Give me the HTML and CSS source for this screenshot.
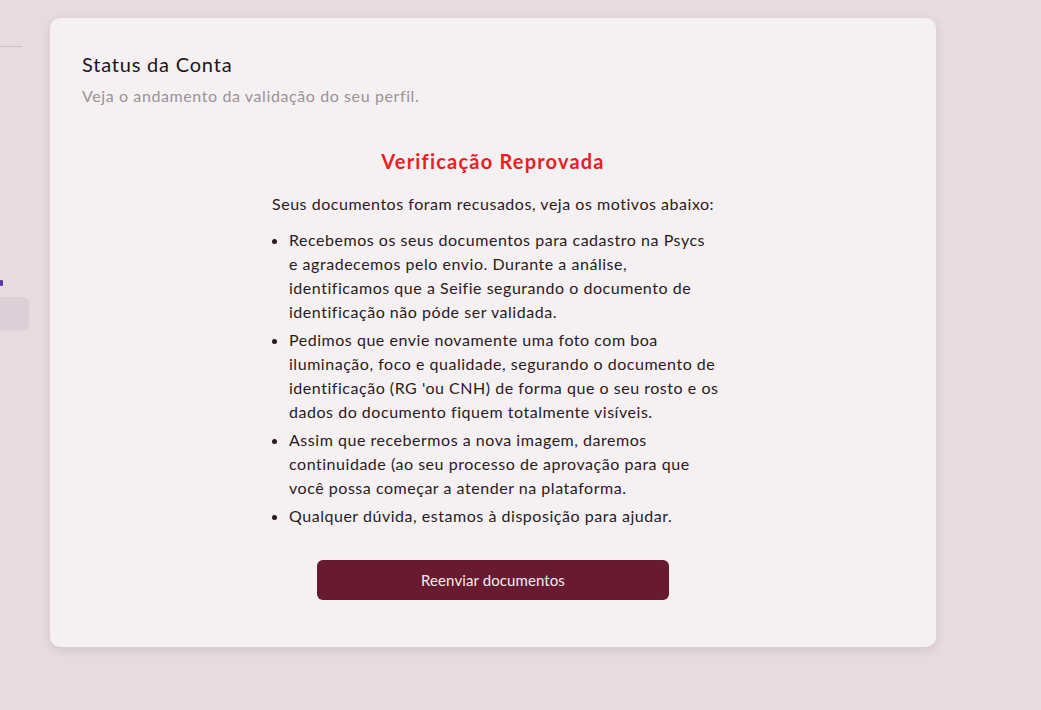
FILE: index.html
```html
<!DOCTYPE html>
<html lang="pt-BR">
<head>
<meta charset="utf-8">
<title>Status da Conta</title>
<link rel="stylesheet" href="styles.css">
</head>
<body>
<div class="layout">
  <aside class="sidebar">
    <div class="sidebar-inner">
      <div class="side-divider"></div>
      <div class="side-mark"></div>
      <div class="side-item"></div>
    </div>
  </aside>
  <main class="card">
    <h1 class="card-title">Status da Conta</h1>
    <p class="card-sub">Veja o andamento da validação do seu perfil.</p>
    <section class="status">
      <h2 class="status-title">Verificação Reprovada</h2>
      <div class="status-body">
        <p class="status-intro">Seus documentos foram recusados, veja os motivos abaixo:</p>
        <ul class="reasons">
          <li>Recebemos os seus documentos para cadastro na Psycs e&nbsp;agradecemos pelo envio. Durante a análise, identificamos que a Seifie segurando o documento de identificação não póde ser validada.</li>
          <li>Pedimos que envie novamente uma foto com boa iluminação, foco e qualidade, segurando o documento de identificação (RG 'ou CNH) de forma que o seu rosto e os dados do documento fiquem totalmente visíveis.</li>
          <li>Assim que recebermos a nova imagem, daremos continuidade (ao seu processo de aprovação para que você possa começar a atender na plataforma.</li>
          <li>Qualquer dúvida, estamos à disposição para ajudar.</li>
        </ul>
      </div>
      <button class="btn-resend" type="button">Reenviar documentos</button>
    </section>
  </main>
</div>
</body>
</html>
```

FILE: styles.css
```css
* { box-sizing: border-box; }
html, body { margin: 0; padding: 0; }
body {
  background: #e6dbdf;
  font-family: "Lato", "Noto Sans", sans-serif;
  color: #2a1a1f;
  width: 1041px;
  height: 710px;
  overflow: hidden;
}
.layout {
  display: flex;
  align-items: flex-start;
  gap: 20px;
  padding-top: 18px;
}
.sidebar {
  width: 30px;
  height: 680px;
  overflow: hidden;
  flex: none;
}
.sidebar-inner {
  width: 220px;
  margin-left: -190px;
  display: flex;
  flex-direction: column;
  align-items: flex-end;
}
.side-divider {
  width: 100px;
  height: 1px;
  background: #cfc2c8;
  margin-top: 28px;
  margin-right: 8px;
}
.side-mark {
  margin-top: 233px;
  margin-right: 27px;
  width: 3px;
  height: 6px;
  border-radius: 1px;
  background: #5a35a0;
}
.side-item {
  margin-top: 11px;
  width: 120px;
  height: 33px;
  border-radius: 6px;
  background: #dccfd5;
  margin-right: 1px;
  box-shadow: 0 1px 2px rgba(0,0,0,0.04);
}
.card {
  width: 886px;
  height: 629px;
  background: #f5f0f1;
  border-radius: 10px;
  box-shadow: 0 3px 10px rgba(80, 40, 55, 0.12);
  padding: 31px 32px;
  flex: none;
}
.card-title {
  margin: 0;
  font-size: 20px;
  font-weight: 400;
  letter-spacing: 0.8px;
  line-height: 30px;
  color: #22141a;
}
.card-sub {
  margin: 6px 0 0;
  font-size: 16px;
  letter-spacing: 0.6px;
  line-height: 22px;
  color: #9c9297;
}
.status {
  display: flex;
  flex-direction: column;
  align-items: center;
  margin-top: 40px;
}
.status-title {
  margin: 0;
  font-size: 20px;
  font-weight: 700;
  letter-spacing: 1.2px;
  line-height: 28px;
  color: #ec1c24;
}
.status-body {
  width: 452px;
  margin-top: 17px;
  margin-left: 10px;
}
.status-intro {
  margin: 0;
  font-size: 16px;
  letter-spacing: 0.53px;
  line-height: 24px;
  color: #2a1a1f;
}
.reasons {
  margin: 12px 0 0;
  padding-left: 17px;
  font-size: 16px;
  letter-spacing: 0.53px;
  line-height: 24px;
}
.reasons li {
  margin-bottom: 4px;
}
.btn-resend {
  margin-top: 28px;
  width: 352px;
  height: 40px;
  border: 0;
  border-radius: 6px;
  background: #671a30;
  color: #f4ecef;
  font-family: inherit;
  font-size: 15px;
  letter-spacing: 0.1px;
  cursor: pointer;
}
```
